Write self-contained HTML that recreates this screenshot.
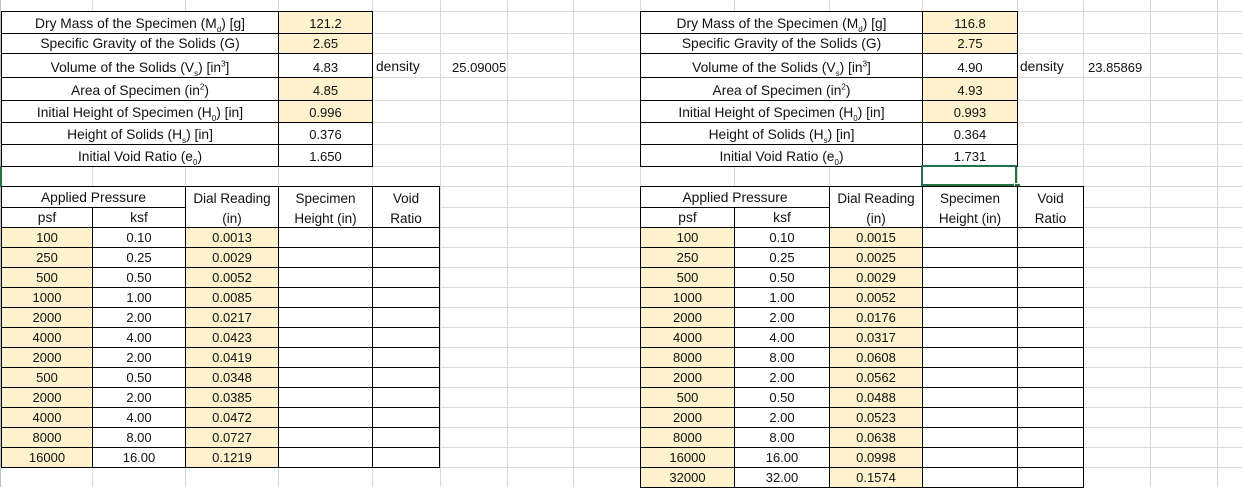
<!DOCTYPE html>
<html><head><meta charset="utf-8"><style>
body{margin:0;background:#fff;width:1242px;height:487px;overflow:hidden;position:relative;font-family:"Liberation Sans",sans-serif;font-size:13px;color:#111}
.h,.v{position:absolute;background:#d9d9d9}
.h{left:0;width:1242px;height:1px}
.v{top:0;height:487px;width:1px}
.c{position:absolute;box-sizing:border-box;border:1px solid #000;background:#fff;display:flex;align-items:flex-end;justify-content:center;padding-bottom:2px;white-space:nowrap;line-height:15px}
.lb{font-size:13.8px}
.y{background:#fff2cc}
.t{position:absolute;white-space:nowrap}
sub,sup{font-size:8px;line-height:0}
.a{left:1px;width:92px}.b{left:92px;width:94px}.d{left:185px;width:94px}.s{left:278px;width:95px}.r{left:372px;width:68px}
.A{left:640px;width:95px}.B{left:734px;width:96px}.D{left:829px;width:94px}.S{left:922px;width:96px}.R{left:1017px;width:67px}
.L{left:1px;width:278px}.V{left:278px;width:95px}.LL{left:640px;width:283px}.VV{left:922px;width:96px}
.dr{height:21px}
.hd{flex-direction:column;align-items:center;justify-content:flex-start;padding:2px 0 0;line-height:20px;font-size:13.5px}
</style></head><body>
<div class="v" style="left:0;background:#bfbfbf"></div>
<div class="v" style="left:92px"></div><div class="v" style="left:185px"></div><div class="v" style="left:278px"></div><div class="v" style="left:372px"></div><div class="v" style="left:440px"></div><div class="v" style="left:507px"></div><div class="v" style="left:573px"></div><div class="v" style="left:640px"></div><div class="v" style="left:734px"></div><div class="v" style="left:829px"></div><div class="v" style="left:922px"></div><div class="v" style="left:1017px"></div><div class="v" style="left:1083px"></div><div class="v" style="left:1150px"></div><div class="v" style="left:1217px"></div>
<div class="h" style="top:11px"></div><div class="h" style="top:33px"></div><div class="h" style="top:53px"></div><div class="h" style="top:77px"></div><div class="h" style="top:100px"></div><div class="h" style="top:122px"></div><div class="h" style="top:144px"></div><div class="h" style="top:166px"></div><div class="h" style="top:186px"></div><div class="h" style="top:207px"></div><div class="h" style="top:227px"></div><div class="h" style="top:247px"></div><div class="h" style="top:267px"></div><div class="h" style="top:287px"></div><div class="h" style="top:307px"></div><div class="h" style="top:327px"></div><div class="h" style="top:347px"></div><div class="h" style="top:367px"></div><div class="h" style="top:387px"></div><div class="h" style="top:407px"></div><div class="h" style="top:427px"></div><div class="h" style="top:447px"></div><div class="h" style="top:467px"></div>
<div style="position:absolute;left:0;top:166px;width:2px;height:21px;background:#217346"></div>

<!-- left top -->
<div class="c L lb" style="top:11px;height:23px"><span>Dry Mass of the Specimen (M<sub>d</sub>) [g]</span></div><div class="c V y" style="top:11px;height:23px">121.2</div>
<div class="c L lb" style="top:33px;height:21px"><span>Specific Gravity of the Solids (G)</span></div><div class="c V y" style="top:33px;height:21px">2.65</div>
<div class="c L lb" style="top:53px;height:25px"><span>Volume of the Solids (V<sub>s</sub>) [in<sup>3</sup>]</span></div><div class="c V" style="top:53px;height:25px">4.83</div>
<div class="c L lb" style="top:77px;height:24px"><span>Area of Specimen (in<sup>2</sup>)</span></div><div class="c V y" style="top:77px;height:24px">4.85</div>
<div class="c L lb" style="top:100px;height:23px"><span>Initial Height of Specimen (H<sub>0</sub>) [in]</span></div><div class="c V y" style="top:100px;height:23px">0.996</div>
<div class="c L lb" style="top:122px;height:23px"><span>Height of Solids (H<sub>s</sub>) [in]</span></div><div class="c V" style="top:122px;height:23px">0.376</div>
<div class="c L lb" style="top:144px;height:23px"><span>Initial Void Ratio (e<sub>0</sub>)</span></div><div class="c V" style="top:144px;height:23px">1.650</div>
<div class="t lb" style="left:376px;top:59px">density</div><div class="t" style="left:452px;top:60px">25.09005</div>

<!-- right top -->
<div class="c LL lb" style="top:11px;height:23px"><span>Dry Mass of the Specimen (M<sub>d</sub>) [g]</span></div><div class="c VV y" style="top:11px;height:23px">116.8</div>
<div class="c LL lb" style="top:33px;height:21px"><span>Specific Gravity of the Solids (G)</span></div><div class="c VV y" style="top:33px;height:21px">2.75</div>
<div class="c LL lb" style="top:53px;height:25px"><span>Volume of the Solids (V<sub>s</sub>) [in<sup>3</sup>]</span></div><div class="c VV" style="top:53px;height:25px">4.90</div>
<div class="c LL lb" style="top:77px;height:24px"><span>Area of Specimen (in<sup>2</sup>)</span></div><div class="c VV y" style="top:77px;height:24px">4.93</div>
<div class="c LL lb" style="top:100px;height:23px"><span>Initial Height of Specimen (H<sub>0</sub>) [in]</span></div><div class="c VV y" style="top:100px;height:23px">0.993</div>
<div class="c LL lb" style="top:122px;height:23px"><span>Height of Solids (H<sub>s</sub>) [in]</span></div><div class="c VV" style="top:122px;height:23px">0.364</div>
<div class="c LL lb" style="top:144px;height:23px"><span>Initial Void Ratio (e<sub>0</sub>)</span></div><div class="c VV" style="top:144px;height:23px">1.731</div>
<div class="t lb" style="left:1020px;top:59px">density</div><div class="t" style="left:1088px;top:60px">23.85869</div>
<div style="position:absolute;left:921px;top:165px;width:96px;height:21px;box-sizing:border-box;border:2px solid #217346"></div>
<div style="position:absolute;left:1014px;top:183px;width:5px;height:5px;background:#217346;border:1px solid #fff"></div>

<!-- left headers -->
<div class="c lb" style="left:1px;width:185px;top:186px;height:22px"><span>Applied Pressure</span></div>
<div class="c a lb" style="top:207px;height:21px"><span>psf</span></div><div class="c b lb" style="top:207px;height:21px"><span>ksf</span></div>
<div class="c d hd" style="top:186px;height:42px"><span>Dial Reading</span><span>(in)</span></div>
<div class="c s hd" style="top:186px;height:42px"><span>Specimen</span><span>Height (in)</span></div>
<div class="c r hd" style="top:186px;height:42px"><span>Void</span><span>Ratio</span></div>

<!-- right headers -->
<div class="c lb" style="left:640px;width:190px;top:186px;height:22px"><span>Applied Pressure</span></div>
<div class="c A lb" style="top:207px;height:21px"><span>psf</span></div><div class="c B lb" style="top:207px;height:21px"><span>ksf</span></div>
<div class="c D hd" style="top:186px;height:42px"><span>Dial Reading</span><span>(in)</span></div>
<div class="c S hd" style="top:186px;height:42px"><span>Specimen</span><span>Height (in)</span></div>
<div class="c R hd" style="top:186px;height:42px"><span>Void</span><span>Ratio</span></div>

<!-- left data -->
<div class="c dr a y" style="top:227px">100</div><div class="c dr b" style="top:227px">0.10</div><div class="c dr d y" style="top:227px">0.0013</div><div class="c dr s" style="top:227px"></div><div class="c dr r" style="top:227px"></div>
<div class="c dr a y" style="top:247px">250</div><div class="c dr b" style="top:247px">0.25</div><div class="c dr d y" style="top:247px">0.0029</div><div class="c dr s" style="top:247px"></div><div class="c dr r" style="top:247px"></div>
<div class="c dr a y" style="top:267px">500</div><div class="c dr b" style="top:267px">0.50</div><div class="c dr d y" style="top:267px">0.0052</div><div class="c dr s" style="top:267px"></div><div class="c dr r" style="top:267px"></div>
<div class="c dr a y" style="top:287px">1000</div><div class="c dr b" style="top:287px">1.00</div><div class="c dr d y" style="top:287px">0.0085</div><div class="c dr s" style="top:287px"></div><div class="c dr r" style="top:287px"></div>
<div class="c dr a y" style="top:307px">2000</div><div class="c dr b" style="top:307px">2.00</div><div class="c dr d y" style="top:307px">0.0217</div><div class="c dr s" style="top:307px"></div><div class="c dr r" style="top:307px"></div>
<div class="c dr a y" style="top:327px">4000</div><div class="c dr b" style="top:327px">4.00</div><div class="c dr d y" style="top:327px">0.0423</div><div class="c dr s" style="top:327px"></div><div class="c dr r" style="top:327px"></div>
<div class="c dr a y" style="top:347px">2000</div><div class="c dr b" style="top:347px">2.00</div><div class="c dr d y" style="top:347px">0.0419</div><div class="c dr s" style="top:347px"></div><div class="c dr r" style="top:347px"></div>
<div class="c dr a y" style="top:367px">500</div><div class="c dr b" style="top:367px">0.50</div><div class="c dr d y" style="top:367px">0.0348</div><div class="c dr s" style="top:367px"></div><div class="c dr r" style="top:367px"></div>
<div class="c dr a y" style="top:387px">2000</div><div class="c dr b" style="top:387px">2.00</div><div class="c dr d y" style="top:387px">0.0385</div><div class="c dr s" style="top:387px"></div><div class="c dr r" style="top:387px"></div>
<div class="c dr a y" style="top:407px">4000</div><div class="c dr b" style="top:407px">4.00</div><div class="c dr d y" style="top:407px">0.0472</div><div class="c dr s" style="top:407px"></div><div class="c dr r" style="top:407px"></div>
<div class="c dr a y" style="top:427px">8000</div><div class="c dr b" style="top:427px">8.00</div><div class="c dr d y" style="top:427px">0.0727</div><div class="c dr s" style="top:427px"></div><div class="c dr r" style="top:427px"></div>
<div class="c dr a y" style="top:447px">16000</div><div class="c dr b" style="top:447px">16.00</div><div class="c dr d y" style="top:447px">0.1219</div><div class="c dr s" style="top:447px"></div><div class="c dr r" style="top:447px"></div>

<!-- right data -->
<div class="c dr A y" style="top:227px">100</div><div class="c dr B" style="top:227px">0.10</div><div class="c dr D y" style="top:227px">0.0015</div><div class="c dr S" style="top:227px"></div><div class="c dr R" style="top:227px"></div>
<div class="c dr A y" style="top:247px">250</div><div class="c dr B" style="top:247px">0.25</div><div class="c dr D y" style="top:247px">0.0025</div><div class="c dr S" style="top:247px"></div><div class="c dr R" style="top:247px"></div>
<div class="c dr A y" style="top:267px">500</div><div class="c dr B" style="top:267px">0.50</div><div class="c dr D y" style="top:267px">0.0029</div><div class="c dr S" style="top:267px"></div><div class="c dr R" style="top:267px"></div>
<div class="c dr A y" style="top:287px">1000</div><div class="c dr B" style="top:287px">1.00</div><div class="c dr D y" style="top:287px">0.0052</div><div class="c dr S" style="top:287px"></div><div class="c dr R" style="top:287px"></div>
<div class="c dr A y" style="top:307px">2000</div><div class="c dr B" style="top:307px">2.00</div><div class="c dr D y" style="top:307px">0.0176</div><div class="c dr S" style="top:307px"></div><div class="c dr R" style="top:307px"></div>
<div class="c dr A y" style="top:327px">4000</div><div class="c dr B" style="top:327px">4.00</div><div class="c dr D y" style="top:327px">0.0317</div><div class="c dr S" style="top:327px"></div><div class="c dr R" style="top:327px"></div>
<div class="c dr A y" style="top:347px">8000</div><div class="c dr B" style="top:347px">8.00</div><div class="c dr D y" style="top:347px">0.0608</div><div class="c dr S" style="top:347px"></div><div class="c dr R" style="top:347px"></div>
<div class="c dr A y" style="top:367px">2000</div><div class="c dr B" style="top:367px">2.00</div><div class="c dr D y" style="top:367px">0.0562</div><div class="c dr S" style="top:367px"></div><div class="c dr R" style="top:367px"></div>
<div class="c dr A y" style="top:387px">500</div><div class="c dr B" style="top:387px">0.50</div><div class="c dr D y" style="top:387px">0.0488</div><div class="c dr S" style="top:387px"></div><div class="c dr R" style="top:387px"></div>
<div class="c dr A y" style="top:407px">2000</div><div class="c dr B" style="top:407px">2.00</div><div class="c dr D y" style="top:407px">0.0523</div><div class="c dr S" style="top:407px"></div><div class="c dr R" style="top:407px"></div>
<div class="c dr A y" style="top:427px">8000</div><div class="c dr B" style="top:427px">8.00</div><div class="c dr D y" style="top:427px">0.0638</div><div class="c dr S" style="top:427px"></div><div class="c dr R" style="top:427px"></div>
<div class="c dr A y" style="top:447px">16000</div><div class="c dr B" style="top:447px">16.00</div><div class="c dr D y" style="top:447px">0.0998</div><div class="c dr S" style="top:447px"></div><div class="c dr R" style="top:447px"></div>
<div class="c dr A y" style="top:467px">32000</div><div class="c dr B" style="top:467px">32.00</div><div class="c dr D y" style="top:467px">0.1574</div><div class="c dr S" style="top:467px"></div><div class="c dr R" style="top:467px"></div>
</body></html>
